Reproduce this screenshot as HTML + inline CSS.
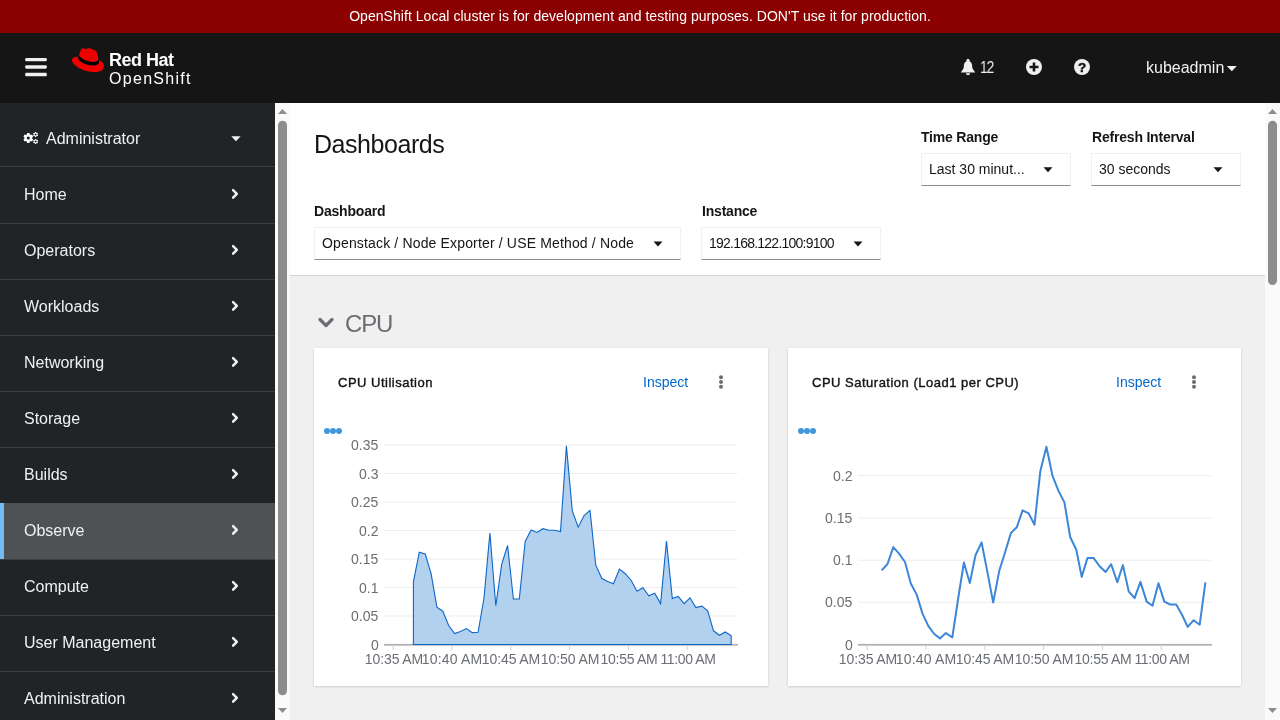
<!DOCTYPE html>
<html><head><meta charset="utf-8"><title>Dashboards · Red Hat OpenShift</title>
<style>
*{margin:0;padding:0;box-sizing:border-box}
html,body{width:1280px;height:720px;overflow:hidden}
body{position:relative;font-family:"Liberation Sans", sans-serif;background:#f0f0f0}
.t{position:absolute;line-height:1;white-space:pre;will-change:transform}
.r{position:absolute}
svg.ov{position:absolute;left:0;top:0;width:1280px;height:720px}
</style></head><body>
<div class="r" style="left:0px;top:0px;width:1280px;height:33px;background:#8b0000;"></div>
<div class="r" style="left:0px;top:33px;width:1280px;height:70px;background:#151515;"></div>
<div class="r" style="left:0px;top:103px;width:275px;height:617px;background:#212427;"></div>
<div class="r" style="left:275px;top:103px;width:15px;height:617px;background:#fafafa;"></div>
<div class="r" style="left:290px;top:103px;width:975px;height:617px;background:#f0f0f0;"></div>
<div class="r" style="left:290px;top:103px;width:975px;height:172px;background:#ffffff;"></div>
<div class="r" style="left:290px;top:275px;width:975px;height:1px;background:#d2d2d2;"></div>
<div class="r" style="left:1265px;top:103px;width:15px;height:617px;background:#fafafa;"></div>
<div class="t" style="left:640px;transform:translateX(-50%);top:9.00px;font-size:14px;color:#ffffff;font-weight:400;letter-spacing:0.045px;">OpenShift Local cluster is for development and testing purposes. DON'T use it for production.</div>
<div class="t" style="left:109px;top:51.00px;font-size:18px;color:#ffffff;font-weight:700;letter-spacing:-0.5px;">Red Hat</div>
<div class="t" style="left:109px;top:71.00px;font-size:16px;color:#ffffff;font-weight:400;letter-spacing:1.3px;">OpenShift</div>
<div class="t" style="left:980px;top:60.00px;font-size:16px;color:#f0f0f0;font-weight:400;letter-spacing:-1.2px;transform:scaleX(0.85);transform-origin:0 0;">12</div>
<div class="t" style="left:1146px;top:60.00px;font-size:16px;color:#f0f0f0;font-weight:400;">kubeadmin</div>
<div class="t" style="left:46.3px;top:131.00px;font-size:16px;color:#f0f0f0;font-weight:400;">Administrator</div>
<div class="r" style="left:0px;top:166px;width:275px;height:1px;background:#3c3f42;"></div>
<div class="t" style="left:24.2px;top:187.00px;font-size:16px;color:#f0f0f0;font-weight:400;">Home</div>
<div class="r" style="left:0px;top:223px;width:275px;height:1px;background:#3c3f42;"></div>
<div class="t" style="left:24.2px;top:243.00px;font-size:16px;color:#f0f0f0;font-weight:400;">Operators</div>
<div class="r" style="left:0px;top:279px;width:275px;height:1px;background:#3c3f42;"></div>
<div class="t" style="left:24.2px;top:299.00px;font-size:16px;color:#f0f0f0;font-weight:400;">Workloads</div>
<div class="r" style="left:0px;top:335px;width:275px;height:1px;background:#3c3f42;"></div>
<div class="t" style="left:24.2px;top:355.00px;font-size:16px;color:#f0f0f0;font-weight:400;">Networking</div>
<div class="r" style="left:0px;top:391px;width:275px;height:1px;background:#3c3f42;"></div>
<div class="t" style="left:24.2px;top:411.00px;font-size:16px;color:#f0f0f0;font-weight:400;">Storage</div>
<div class="r" style="left:0px;top:447px;width:275px;height:1px;background:#3c3f42;"></div>
<div class="t" style="left:24.2px;top:467.00px;font-size:16px;color:#f0f0f0;font-weight:400;">Builds</div>
<div class="r" style="left:0px;top:503px;width:275px;height:1px;background:#3c3f42;"></div>
<div class="r" style="left:0px;top:503px;width:275px;height:56px;background:#4f5255;"></div>
<div class="r" style="left:0px;top:503px;width:4px;height:56px;background:#73bcf7;"></div>
<div class="t" style="left:24.2px;top:523.00px;font-size:16px;color:#f0f0f0;font-weight:400;">Observe</div>
<div class="r" style="left:0px;top:559px;width:275px;height:1px;background:#3c3f42;"></div>
<div class="t" style="left:24.2px;top:579.00px;font-size:16px;color:#f0f0f0;font-weight:400;">Compute</div>
<div class="r" style="left:0px;top:615px;width:275px;height:1px;background:#3c3f42;"></div>
<div class="t" style="left:24.2px;top:635.00px;font-size:16px;color:#f0f0f0;font-weight:400;">User Management</div>
<div class="r" style="left:0px;top:671px;width:275px;height:1px;background:#3c3f42;"></div>
<div class="t" style="left:24.2px;top:691.00px;font-size:16px;color:#f0f0f0;font-weight:400;">Administration</div>
<div class="t" style="left:314.3px;top:132.00px;font-size:25px;color:#151515;font-weight:400;letter-spacing:-0.45px;">Dashboards</div>
<div class="t" style="left:921.4px;top:130.00px;font-size:14px;color:#151515;font-weight:700;letter-spacing:-0.2px;">Time Range</div>
<div class="r" style="left:921px;top:153.3px;width:150px;height:33px;background:#fff;border:1px solid #f0f0f0;border-bottom-color:#8a8d90;"></div>
<div class="t" style="left:929.4px;top:162.00px;font-size:14px;color:#151515;font-weight:400;letter-spacing:0px;">Last 30 minut...</div>
<div class="t" style="left:1091.6px;top:130.00px;font-size:14px;color:#151515;font-weight:700;letter-spacing:-0.2px;">Refresh Interval</div>
<div class="r" style="left:1091px;top:153.3px;width:150px;height:33px;background:#fff;border:1px solid #f0f0f0;border-bottom-color:#8a8d90;"></div>
<div class="t" style="left:1099.4px;top:162.00px;font-size:14px;color:#151515;font-weight:400;letter-spacing:0px;">30 seconds</div>
<div class="t" style="left:314.3px;top:204.00px;font-size:14px;color:#151515;font-weight:700;letter-spacing:-0.2px;">Dashboard</div>
<div class="r" style="left:314px;top:227.4px;width:367px;height:33px;background:#fff;border:1px solid #f0f0f0;border-bottom-color:#8a8d90;"></div>
<div class="t" style="left:322.4px;top:236.00px;font-size:14px;color:#151515;font-weight:400;letter-spacing:0.155px;">Openstack / Node Exporter / USE Method / Node</div>
<div class="t" style="left:701.5px;top:204.00px;font-size:14px;color:#151515;font-weight:700;letter-spacing:-0.2px;">Instance</div>
<div class="r" style="left:701px;top:227.4px;width:180px;height:33px;background:#fff;border:1px solid #f0f0f0;border-bottom-color:#8a8d90;"></div>
<div class="t" style="left:709.4px;top:236.00px;font-size:14px;color:#151515;font-weight:400;letter-spacing:-0.77px;">192.168.122.100:9100</div>
<div class="t" style="left:344.5px;top:312.00px;font-size:24px;color:#6a6e73;font-weight:400;letter-spacing:-1.2px;">CPU</div>
<div class="r" style="left:314px;top:348px;width:454px;height:338px;background:#fff;box-shadow:0 1px 2px rgba(3,3,3,.12),0 0 2px rgba(3,3,3,.06);"></div>
<div class="t" style="left:338.2px;top:376.00px;font-size:13px;color:#151515;font-weight:400;-webkit-text-stroke:0.4px #151515;letter-spacing:0.5px;">CPU Utilisation</div>
<div class="t" style="left:643.4px;top:375.00px;font-size:14px;color:#0066cc;font-weight:400;">Inspect</div>
<div class="t" style="right:901.5px;top:438.00px;font-size:14px;color:#6a6e73;font-weight:400;">0.35</div>
<div class="t" style="right:901.5px;top:467.00px;font-size:14px;color:#6a6e73;font-weight:400;">0.3</div>
<div class="t" style="right:901.5px;top:495.00px;font-size:14px;color:#6a6e73;font-weight:400;">0.25</div>
<div class="t" style="right:901.5px;top:524.00px;font-size:14px;color:#6a6e73;font-weight:400;">0.2</div>
<div class="t" style="right:901.5px;top:552.00px;font-size:14px;color:#6a6e73;font-weight:400;">0.15</div>
<div class="t" style="right:901.5px;top:581.00px;font-size:14px;color:#6a6e73;font-weight:400;">0.1</div>
<div class="t" style="right:901.5px;top:609.00px;font-size:14px;color:#6a6e73;font-weight:400;">0.05</div>
<div class="t" style="right:901.5px;top:638.00px;font-size:14px;color:#6a6e73;font-weight:400;">0</div>
<div class="t" style="left:393.5px;transform:translateX(-50%);top:652.00px;font-size:14px;color:#6a6e73;font-weight:400;letter-spacing:-0.11px;">10:35 AM</div>
<div class="t" style="left:452.1px;transform:translateX(-50%);top:652.00px;font-size:14px;color:#6a6e73;font-weight:400;letter-spacing:0.16px;">10:40 AM</div>
<div class="t" style="left:510.59999999999997px;transform:translateX(-50%);top:652.00px;font-size:14px;color:#6a6e73;font-weight:400;letter-spacing:-0.11px;">10:45 AM</div>
<div class="t" style="left:570.3999999999999px;transform:translateX(-50%);top:652.00px;font-size:14px;color:#6a6e73;font-weight:400;letter-spacing:-0.09px;">10:50 AM</div>
<div class="t" style="left:629.0px;transform:translateX(-50%);top:652.00px;font-size:14px;color:#6a6e73;font-weight:400;letter-spacing:-0.3px;">10:55 AM</div>
<div class="t" style="left:687.6px;transform:translateX(-50%);top:652.00px;font-size:14px;color:#6a6e73;font-weight:400;letter-spacing:-0.36px;">11:00 AM</div>
<div class="r" style="left:788px;top:348px;width:453px;height:338px;background:#fff;box-shadow:0 1px 2px rgba(3,3,3,.12),0 0 2px rgba(3,3,3,.06);"></div>
<div class="t" style="left:812.2px;top:376.00px;font-size:13px;color:#151515;font-weight:400;-webkit-text-stroke:0.4px #151515;letter-spacing:0.5px;">CPU Saturation (Load1 per CPU)</div>
<div class="t" style="left:1116.4px;top:375.00px;font-size:14px;color:#0066cc;font-weight:400;">Inspect</div>
<div class="t" style="right:427.5px;top:469.00px;font-size:14px;color:#6a6e73;font-weight:400;">0.2</div>
<div class="t" style="right:427.5px;top:511.00px;font-size:14px;color:#6a6e73;font-weight:400;">0.15</div>
<div class="t" style="right:427.5px;top:553.00px;font-size:14px;color:#6a6e73;font-weight:400;">0.1</div>
<div class="t" style="right:427.5px;top:595.00px;font-size:14px;color:#6a6e73;font-weight:400;">0.05</div>
<div class="t" style="right:427.5px;top:638.00px;font-size:14px;color:#6a6e73;font-weight:400;">0</div>
<div class="t" style="left:867.5px;transform:translateX(-50%);top:652.00px;font-size:14px;color:#6a6e73;font-weight:400;letter-spacing:-0.11px;">10:35 AM</div>
<div class="t" style="left:926.1px;transform:translateX(-50%);top:652.00px;font-size:14px;color:#6a6e73;font-weight:400;letter-spacing:0.16px;">10:40 AM</div>
<div class="t" style="left:984.6px;transform:translateX(-50%);top:652.00px;font-size:14px;color:#6a6e73;font-weight:400;letter-spacing:-0.11px;">10:45 AM</div>
<div class="t" style="left:1044.3999999999999px;transform:translateX(-50%);top:652.00px;font-size:14px;color:#6a6e73;font-weight:400;letter-spacing:-0.09px;">10:50 AM</div>
<div class="t" style="left:1103.0px;transform:translateX(-50%);top:652.00px;font-size:14px;color:#6a6e73;font-weight:400;letter-spacing:-0.3px;">10:55 AM</div>
<div class="t" style="left:1161.6000000000001px;transform:translateX(-50%);top:652.00px;font-size:14px;color:#6a6e73;font-weight:400;letter-spacing:-0.36px;">11:00 AM</div>
<svg class="ov" width="1280" height="720" viewBox="0 0 1280 720">
<rect x="25.2" y="57.9" width="21.6" height="3.45" rx="1.1" fill="#f0f0f0"/>
<rect x="25.2" y="65.2" width="21.6" height="3.45" rx="1.1" fill="#f0f0f0"/>
<rect x="25.2" y="72.8" width="21.6" height="3.45" rx="1.1" fill="#f0f0f0"/>
<g transform="translate(71.9,47.9) scale(0.168)"><path fill="#e00" d="M127.47,83.49c12.51,0,30.61-2.58,30.61-17.46a14,14,0,0,0-.31-3.42l-7.45-32.36c-1.72-7.12-3.23-10.35-15.73-16.6C124.89,8.69,103.76.5,97.51.5,91.69.5,90,8,83.06,8c-6.68,0-11.64-5.6-17.89-5.6-6,0-9.91,4.09-12.930,12.5,0,0-8.41,23.72-9.49,27.16A6.43,6.43,0,0,0,42.53,44c0,9.22,36.3,39.45,84.94,39.45M160,72.07c1.73,8.19,1.73,9.050,1.73,10.13,0,14-15.74,21.77-36.43,21.77C78.54,104,37.58,76.6,37.58,58.49a18.450,18.45,0,0,1,1.51-7.33C22.27,52,.5,55,.5,74.22c0,31.48,74.59,70.28,133.65,70.28,45.28,0,56.7-20.48,56.7-36.65,0-12.72-11-27.16-30.83-35.78"/><path fill="#000" d="M160,72.07c1.73,8.19,1.73,9.05,1.73,10.13,0,14-15.74,21.77-36.43,21.77C78.54,104,37.58,76.6,37.58,58.49a18.45,18.45,0,0,1,1.51-7.33l3.66-9.06A6.43,6.43,0,0,0,42.53,44c0,9.22,36.3,39.45,84.94,39.45,12.51,0,30.61-2.58,30.61-17.46a14,14,0,0,0-.31-3.42Z"/></g>
<circle cx="968" cy="60.3" r="1.5" fill="#f0f0f0"/><path d="M961.6,71.2 C963.3,69.6 963.9,67.8 963.9,65.6 C963.9,62.9 965.7,61.1 968,61.1 C970.3,61.1 972.1,62.9 972.1,65.6 C972.1,67.8 972.7,69.6 974.4,71.2 L975.2,72.4 L960.8,72.4 Z M966,73.3 A2,1.9 0 0 0 970,73.3 Z" fill="#f0f0f0"/>
<circle cx="1034" cy="67" r="8" fill="#f0f0f0"/><path d="M1029.5,67h9M1034,62.5v9" stroke="#151515" stroke-width="2.6"/>
<circle cx="1082" cy="67" r="8" fill="#f0f0f0"/><text x="1082" y="71.8" font-family="Liberation Sans" font-weight="700" font-size="13.5" text-anchor="middle" fill="#151515" stroke="#151515" stroke-width="0.45">?</text>
<path d="M1226.8,66h10l-5,5.3z" fill="#f0f0f0"/>
<path fill="#ffffff" fill-rule="evenodd" d="M26.93,134.24 L27.15,133.03 L29.45,133.03 L29.67,134.24 L30.87,134.94 L32.03,134.52 L33.18,136.51 L32.24,137.31 L32.24,138.69 L33.18,139.49 L32.03,141.48 L30.87,141.06 L29.67,141.76 L29.45,142.97 L27.15,142.97 L26.93,141.76 L25.73,141.06 L24.57,141.48 L23.42,139.49 L24.36,138.69 L24.36,137.31 L23.42,136.51 L24.57,134.52 L25.73,134.94Z M29.90,138.00 A1.6,1.6 0 1 0 26.70,138.00 A1.6,1.6 0 1 0 29.90,138.00Z"/>
<path fill="#ffffff" fill-rule="evenodd" d="M34.87,132.64 L34.98,131.98 L36.22,131.98 L36.33,132.64 L36.80,132.91 L37.43,132.68 L38.05,133.75 L37.53,134.18 L37.53,134.72 L38.05,135.15 L37.43,136.22 L36.80,135.99 L36.33,136.26 L36.22,136.92 L34.98,136.92 L34.87,136.26 L34.40,135.99 L33.77,136.22 L33.15,135.15 L33.67,134.72 L33.67,134.18 L33.15,133.75 L33.77,132.68 L34.40,132.91Z M36.60,134.45 A1.0,1.0 0 1 0 34.60,134.45 A1.0,1.0 0 1 0 36.60,134.45Z"/>
<path fill="#ffffff" fill-rule="evenodd" d="M34.87,139.74 L34.98,139.08 L36.22,139.08 L36.33,139.74 L36.80,140.01 L37.43,139.78 L38.05,140.85 L37.53,141.28 L37.53,141.82 L38.05,142.25 L37.43,143.32 L36.80,143.09 L36.33,143.36 L36.22,144.02 L34.98,144.02 L34.87,143.36 L34.40,143.09 L33.77,143.32 L33.15,142.25 L33.67,141.82 L33.67,141.28 L33.15,140.85 L33.77,139.78 L34.40,140.01Z M36.60,141.55 A1.0,1.0 0 1 0 34.60,141.55 A1.0,1.0 0 1 0 36.60,141.55Z"/>
<path d="M231.3,136.3h9.3l-4.65,5z" fill="#f0f0f0"/>
<path d="M233.1,190.1l3.7,3.8-3.7,3.8" fill="none" stroke="#f0f0f0" stroke-width="2.5" stroke-linecap="round" stroke-linejoin="round"/>
<path d="M233.1,246.1l3.7,3.8-3.7,3.8" fill="none" stroke="#f0f0f0" stroke-width="2.5" stroke-linecap="round" stroke-linejoin="round"/>
<path d="M233.1,302.1l3.7,3.8-3.7,3.8" fill="none" stroke="#f0f0f0" stroke-width="2.5" stroke-linecap="round" stroke-linejoin="round"/>
<path d="M233.1,358.1l3.7,3.8-3.7,3.8" fill="none" stroke="#f0f0f0" stroke-width="2.5" stroke-linecap="round" stroke-linejoin="round"/>
<path d="M233.1,414.1l3.7,3.8-3.7,3.8" fill="none" stroke="#f0f0f0" stroke-width="2.5" stroke-linecap="round" stroke-linejoin="round"/>
<path d="M233.1,470.1l3.7,3.8-3.7,3.8" fill="none" stroke="#f0f0f0" stroke-width="2.5" stroke-linecap="round" stroke-linejoin="round"/>
<path d="M233.1,526.1l3.7,3.8-3.7,3.8" fill="none" stroke="#f0f0f0" stroke-width="2.5" stroke-linecap="round" stroke-linejoin="round"/>
<path d="M233.1,582.1l3.7,3.8-3.7,3.8" fill="none" stroke="#f0f0f0" stroke-width="2.5" stroke-linecap="round" stroke-linejoin="round"/>
<path d="M233.1,638.1l3.7,3.8-3.7,3.8" fill="none" stroke="#f0f0f0" stroke-width="2.5" stroke-linecap="round" stroke-linejoin="round"/>
<path d="M233.1,694.1l3.7,3.8-3.7,3.8" fill="none" stroke="#f0f0f0" stroke-width="2.5" stroke-linecap="round" stroke-linejoin="round"/>
<path d="M278,114h9l-4.5,-5z" fill="#8c8c8c"/>
<path d="M278,708h9l-4.5,5z" fill="#8c8c8c"/>
<path d="M1268,114h9l-4.5,-5z" fill="#8c8c8c"/>
<path d="M1268,708h9l-4.5,5z" fill="#8c8c8c"/>
<rect x="278" y="120.8" width="9" height="574.4" rx="4.5" fill="#8c8c8c"/>
<rect x="1268" y="120.8" width="9" height="164.2" rx="4.5" fill="#8c8c8c"/>
<path d="M1043.5,167.3h9l-4.5,5z" fill="#151515"/>
<path d="M1213.5,167.3h9l-4.5,5z" fill="#151515"/>
<path d="M653.5,241.4h9l-4.5,5z" fill="#151515"/>
<path d="M853.5,241.4h9l-4.5,5z" fill="#151515"/>
<path d="M320,319.5l6,6 6,-6" fill="none" stroke="#6a6e73" stroke-width="3.2" stroke-linecap="round" stroke-linejoin="round"/>
<circle cx="721" cy="377.164" r="2" fill="#6a6e73"/>
<circle cx="721" cy="382.0" r="2" fill="#6a6e73"/>
<circle cx="721" cy="386.836" r="2" fill="#6a6e73"/>
<circle cx="327" cy="431" r="3" fill="#3f97dd"/>
<circle cx="333" cy="431" r="3" fill="#3f97dd"/>
<circle cx="339" cy="431" r="3" fill="#3f97dd"/>
<rect x="384" y="444.5" width="353.5" height="1" fill="#ededed"/>
<rect x="384" y="473.0" width="353.5" height="1" fill="#ededed"/>
<rect x="384" y="501.5" width="353.5" height="1" fill="#ededed"/>
<rect x="384" y="530.0" width="353.5" height="1" fill="#ededed"/>
<rect x="384" y="558.5" width="353.5" height="1" fill="#ededed"/>
<rect x="384" y="587.0" width="353.5" height="1" fill="#ededed"/>
<rect x="384" y="615.5" width="353.5" height="1" fill="#ededed"/>
<rect x="384" y="643.9" width="354" height="1.8" fill="#b2b2b2"/>
<path d="M413.4,581.8 L419.3,552.2 L425.2,554.0 L431.1,573.6 L436.9,607.2 L442.8,611.2 L448.7,625.5 L454.6,633.5 L460.5,631.6 L466.4,628.6 L472.3,632.6 L478.1,632.3 L484.0,598.0 L489.9,533.0 L495.8,605.7 L501.7,564.4 L507.6,545.5 L513.4,599.0 L519.3,599.0 L525.2,541.5 L531.1,529.9 L537.0,532.4 L542.9,528.7 L548.8,530.2 L554.6,530.2 L560.5,531.5 L566.4,445.9 L572.3,511.0 L578.2,527.2 L584.1,515.6 L590.0,510.4 L595.8,565.2 L601.7,578.3 L607.6,581.4 L613.5,583.8 L619.4,569.1 L625.3,573.7 L631.2,580.5 L637.0,591.2 L642.9,587.7 L648.8,595.8 L654.7,593.3 L660.6,603.6 L666.5,541.0 L672.3,598.4 L678.2,596.4 L684.1,603.6 L690.0,597.8 L695.9,607.5 L701.8,606.1 L707.7,610.8 L713.5,630.8 L719.4,635.3 L725.3,632.0 L731.2,635.7 L731.2,644.5 L413.4,644.5Z" fill="#b1d1ef" stroke="#0f66c9" stroke-width="1.1" stroke-linejoin="miter"/>
<rect x="392.7" y="645" width="1" height="5" fill="#d2d2d2"/>
<rect x="451.5" y="645" width="1" height="5" fill="#d2d2d2"/>
<rect x="510.29999999999995" y="645" width="1" height="5" fill="#d2d2d2"/>
<rect x="569.0999999999999" y="645" width="1" height="5" fill="#d2d2d2"/>
<rect x="627.9" y="645" width="1" height="5" fill="#d2d2d2"/>
<rect x="686.7" y="645" width="1" height="5" fill="#d2d2d2"/>
<circle cx="1194" cy="377.164" r="2" fill="#6a6e73"/>
<circle cx="1194" cy="382.0" r="2" fill="#6a6e73"/>
<circle cx="1194" cy="386.836" r="2" fill="#6a6e73"/>
<circle cx="801" cy="431" r="3" fill="#3f97dd"/>
<circle cx="807" cy="431" r="3" fill="#3f97dd"/>
<circle cx="813" cy="431" r="3" fill="#3f97dd"/>
<rect x="858" y="475.1" width="353.5" height="1" fill="#ededed"/>
<rect x="858" y="517.5" width="353.5" height="1" fill="#ededed"/>
<rect x="858" y="559.7" width="353.5" height="1" fill="#ededed"/>
<rect x="858" y="601.8" width="353.5" height="1" fill="#ededed"/>
<rect x="858" y="643.9" width="354" height="1.8" fill="#b2b2b2"/>
<path d="M881.7,570.4 L887.5,564.0 L893.3,547.1 L899.2,553.8 L905.0,562.0 L910.8,583.5 L916.7,594.6 L922.5,613.6 L928.4,626.1 L934.2,634.0 L940.0,638.4 L945.9,633.1 L952.3,637.5 L958.1,599.0 L963.9,562.5 L969.8,583.0 L975.5,555.3 L981.6,542.4 L987.4,572.1 L993.2,602.6 L999.3,570.6 L1005.1,552.2 L1010.9,533.0 L1016.8,527.2 L1022.6,510.4 L1028.7,513.4 L1034.5,524.7 L1040.3,471.3 L1046.4,446.8 L1052.5,475.8 L1058.6,491.1 L1064.4,502.4 L1070.2,537.0 L1076.3,549.8 L1081.7,576.9 L1087.5,557.9 L1093.5,557.9 L1099.4,566.0 L1105.6,572.0 L1111.2,564.2 L1117.3,582.3 L1122.9,565.1 L1128.7,591.3 L1134.6,598.2 L1140.4,581.9 L1146.7,601.6 L1152.5,605.8 L1158.5,583.2 L1164.3,601.6 L1170.2,604.5 L1176.2,604.5 L1182.0,614.8 L1187.7,626.9 L1193.7,620.2 L1199.7,624.7 L1205.4,582.3" fill="none" stroke="#3c87d8" stroke-width="2" stroke-linejoin="round"/>
<rect x="866.7" y="645" width="1" height="5" fill="#d2d2d2"/>
<rect x="925.5" y="645" width="1" height="5" fill="#d2d2d2"/>
<rect x="984.3000000000001" y="645" width="1" height="5" fill="#d2d2d2"/>
<rect x="1043.1" y="645" width="1" height="5" fill="#d2d2d2"/>
<rect x="1101.9" y="645" width="1" height="5" fill="#d2d2d2"/>
<rect x="1160.7" y="645" width="1" height="5" fill="#d2d2d2"/>
</svg>
</body></html>
